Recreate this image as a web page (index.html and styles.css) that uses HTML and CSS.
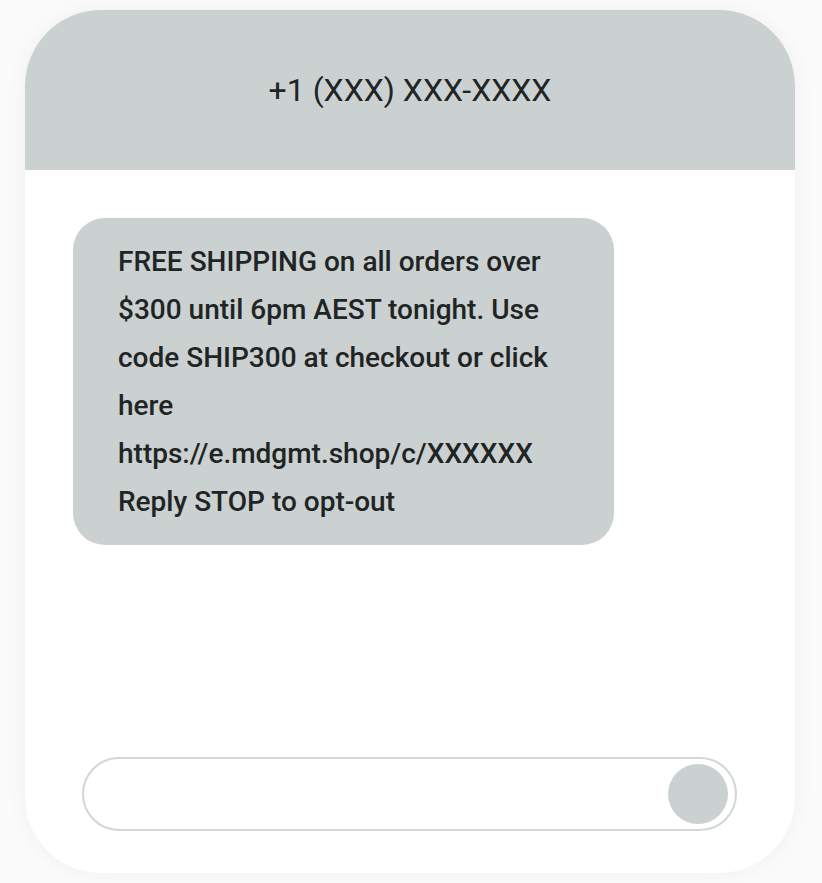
FILE: index.html
```html
<!DOCTYPE html>
<html>
<head>
<meta charset="utf-8">
<link rel="stylesheet" href="styles.css">
</head>
<body>
<div class="phone">
  <div class="header">+1 (XXX) XXX-XXXX</div>
  <div class="thread">
    <div class="bubble">FREE SHIPPING on all orders over $300 until 6pm AEST tonight. Use code SHIP300 at checkout or click here https://e.mdgmt.shop/c/XXXXXX Reply STOP to opt-out</div>
  </div>
  <div class="composer">
    <div class="input">
      <div class="send"></div>
    </div>
  </div>
</div>
</body>
</html>
```
FILE: styles.css
```css
html, body {
  margin: 0;
  padding: 0;
}
body {
  background: #fbfbfb;
  font-family: Roboto, "Liberation Sans", sans-serif;
  color: #1f2424;
  width: 822px;
  height: 883px;
  overflow: hidden;
}
.phone {
  margin: 10px 0 0 25px;
  width: 770px;
  height: 863px;
  background: #ffffff;
  border-radius: 76px;
  overflow: hidden;
  box-shadow: 0 0 24px rgba(0, 0, 0, 0.05);
  display: flex;
  flex-direction: column;
}
.header {
  height: 160px;
  background: #cbd1d1;
  display: flex;
  align-items: center;
  justify-content: center;
  font-size: 32px;
  font-weight: 400;
  color: #202424;
  flex: none;
}
.thread {
  flex: 1;
  padding: 48px 0 0 48px;
}
.bubble {
  width: 451px;
  background: #cbd1d1;
  border-radius: 32px;
  padding: 20px 45px 19px 45px;
  font-size: 28px;
  font-weight: 500;
  line-height: 48px;
  color: #1f2424;
}
.composer {
  padding: 0 58px 42px 57px;
  flex: none;
}
.input {
  height: 70px;
  border: 2px solid #d2d6d6;
  border-radius: 40px;
  display: flex;
  align-items: center;
  justify-content: flex-end;
  padding: 0 7px;
}
.send {
  width: 60px;
  height: 60px;
  border-radius: 50%;
  background: #cbd1d1;
}
```
